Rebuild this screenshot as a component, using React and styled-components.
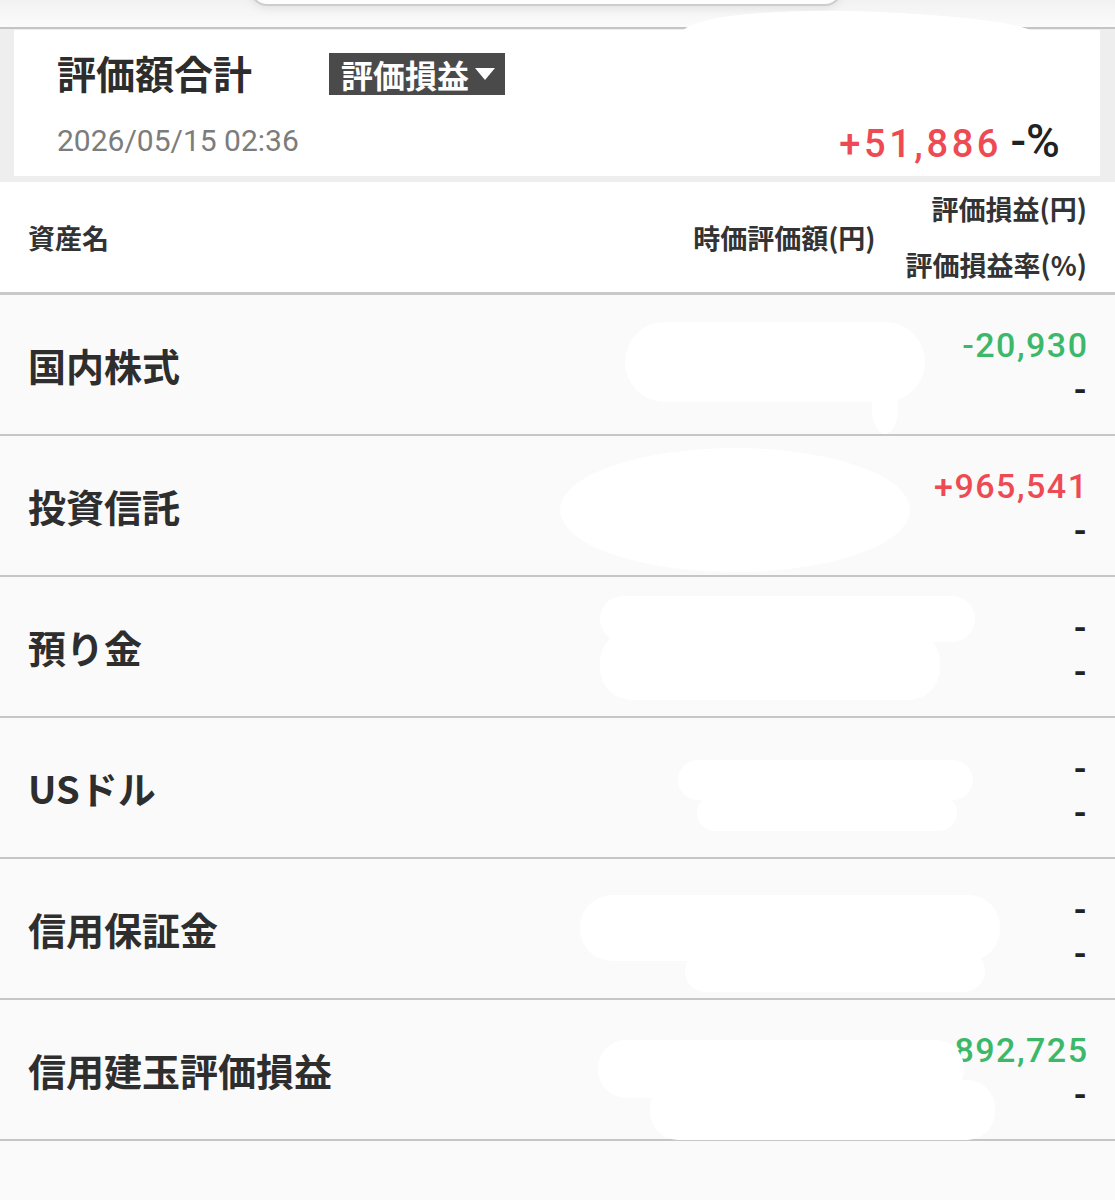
import React from "react";
import styled, { createGlobalStyle } from "styled-components";

const GlobalStyle = createGlobalStyle`
  html, body { margin: 0; padding: 0; background: #fafafa; }
  body { font-family: "Noto Sans CJK JP", "Noto Sans", sans-serif; }
  * { box-sizing: border-box; }
`;

const Page = styled.div`
  position: relative;
  width: 1115px;
  min-height: 1200px;
  background: #fafafa;
  overflow: hidden;
`;

const TopBar = styled.div`
  height: 29px;
  display: flex;
  padding-left: 250px;
  background: linear-gradient(to bottom, #f2f2f2, #fbfbfb);
  border-bottom: 2px solid #c4c4c4;
  overflow: hidden;
`;

const SearchPill = styled.div`
  width: 592px;
  height: 34px;
  margin-top: -28px;
  border: 2px solid #cdcdcd;
  border-radius: 30px;
  background: #fdfdfd;
  box-shadow: 0 3px 8px rgba(0, 0, 0, 0.07);
`;

const SummaryWrap = styled.div`
  background: #eeeeee;
  padding: 1px 15px 6px 14px;
`;

const Card = styled.div`
  background: #fff;
  height: 146px;
  padding: 0 43px 8px 43px;
  display: flex;
  flex-direction: column;
`;

const TitleRow = styled.div`
  height: 84px;
  display: flex;
  align-items: center;
`;

const Title = styled.div`
  font-size: 39px;
  font-weight: 700;
  line-height: 1;
  color: #2d2d2d;
`;

const Badge = styled.div`
  margin-left: 77px;
  margin-top: 4px;
  height: 42px;
  padding: 0 9px 0 12px;
  display: flex;
  align-items: center;
  gap: 5px;
  background: #4a4a4a;
  color: #fff;
  font-size: 32px;
  font-weight: 700;
  line-height: 1;
`;

const DateRow = styled.div`
  flex: 1;
  display: flex;
  align-items: center;
  justify-content: space-between;
`;

const DateText = styled.div`
  font-family: Roboto, "Liberation Sans", sans-serif;
  font-size: 30px;
  font-weight: 400;
  color: #7c7c7c;
  line-height: 1;
`;

const Gain = styled.div`
  display: flex;
  align-items: baseline;
  gap: 12px;
  margin-right: -3px;
  font-family: Roboto, "Liberation Sans", sans-serif;
  line-height: 1;
  white-space: pre;
`;

const GainAmount = styled.span`
  color: ${(p) => p.$color};
  font-size: 38px;
  font-weight: 500;
  letter-spacing: 3.6px;
  margin-right: -3.6px;
`;

const GainRate = styled.span`
  color: #222;
  font-size: 46px;
  font-weight: 500;
`;

const TableHeader = styled.div`
  height: 113px;
  background: #fff;
  border-bottom: 3px solid #c9c9c9;
  padding: 0 28px;
  display: flex;
  align-items: center;
`;

const HeaderName = styled.div`
  flex: 1;
  font-size: 27px;
  font-weight: 700;
  color: #333;
`;

const HeaderMarket = styled.div`
  font-size: 27px;
  font-weight: 700;
  color: #333;
  margin-right: 30px;
`;

const HeaderRight = styled.div`
  display: flex;
  flex-direction: column;
  align-items: flex-end;
  font-size: 27px;
  font-weight: 700;
  color: #333;
  line-height: 56px;
`;

const Row = styled.div`
  height: 141px;
  background: #fafafa;
  border-bottom: 2px solid #c6c6c6;
  padding: 0 28px;
  display: flex;
  align-items: center;
`;

const Name = styled.div`
  flex: 1;
  font-size: 38px;
  font-weight: 700;
  color: #2e2e2e;
`;

const Values = styled.div`
  display: flex;
  flex-direction: column;
  align-items: flex-end;
  margin-top: 4px;
`;

const Value = styled.div`
  font-family: Roboto, "Liberation Sans", sans-serif;
  font-size: 34px;
  line-height: 44px;
  letter-spacing: 1.5px;
  margin-right: -1.5px;
  color: ${(p) => p.$color || "#222"};
  font-weight: ${(p) => (p.$dash ? 700 : 500)};
`;

const Overlay = styled.svg`
  position: absolute;
  top: 0;
  left: 0;
  pointer-events: none;
`;

const RED = "#ee4a54";
const GREEN = "#3bb86a";

const rows = [
  { name: "国内株式", gain: "-20,930", color: GREEN, rate: "-" },
  { name: "投資信託", gain: "+965,541", color: RED, rate: "-" },
  { name: "預り金", gain: "-", rate: "-" },
  { name: "USドル", gain: "-", rate: "-" },
  { name: "信用保証金", gain: "-", rate: "-" },
  { name: "信用建玉評価損益", gain: "-892,725", color: GREEN, rate: "-" },
];

export default function App() {
  return (
    <>
      <GlobalStyle />
      <Page>
        <TopBar>
          <SearchPill />
        </TopBar>
        <SummaryWrap>
          <Card>
            <TitleRow>
              <Title>評価額合計</Title>
              <Badge>
                評価損益
                <svg width="22" height="14" viewBox="0 0 22 14">
                  <path d="M1 1 H21 L11 13 Z" fill="#fff" />
                </svg>
              </Badge>
            </TitleRow>
            <DateRow>
              <DateText>2026/05/15 02:36</DateText>
              <Gain>
                <GainAmount $color={RED}>+51,886</GainAmount>
                <GainRate>-%</GainRate>
              </Gain>
            </DateRow>
          </Card>
        </SummaryWrap>
        <TableHeader>
          <HeaderName>資産名</HeaderName>
          <HeaderMarket>時価評価額(円)</HeaderMarket>
          <HeaderRight>
            <div>評価損益(円)</div>
            <div>評価損益率(%)</div>
          </HeaderRight>
        </TableHeader>
        {rows.map((r) => (
          <Row key={r.name}>
            <Name>{r.name}</Name>
            <Values>
              <Value $color={r.color} $dash={r.gain === "-"}>
                {r.gain}
              </Value>
              <Value $dash>{r.rate}</Value>
            </Values>
          </Row>
        ))}
        <Overlay width="1115" height="1200" viewBox="0 0 1115 1200">
          <g fill="#ffffff">
            <path d="M680 34 C690 14 790 8 880 12 C960 16 1010 22 1030 30 L1040 70 L690 70 Z" />
            <rect x="625" y="322" width="300" height="80" rx="40" />
            <ellipse cx="885" cy="408" rx="13" ry="26" />
            <ellipse cx="735" cy="510" rx="175" ry="62" />
            <rect x="600" y="596" width="375" height="46" rx="23" />
            <rect x="600" y="630" width="340" height="70" rx="32" />
            <rect x="678" y="760" width="295" height="40" rx="20" />
            <rect x="697" y="795" width="260" height="36" rx="18" />
            <rect x="580" y="895" width="420" height="66" rx="32" />
            <rect x="685" y="950" width="300" height="42" rx="21" />
            <rect x="598" y="1040" width="366" height="58" rx="28" />
            <rect x="650" y="1080" width="345" height="60" rx="28" />
          </g>
        </Overlay>
      </Page>
    </>
  );
}
